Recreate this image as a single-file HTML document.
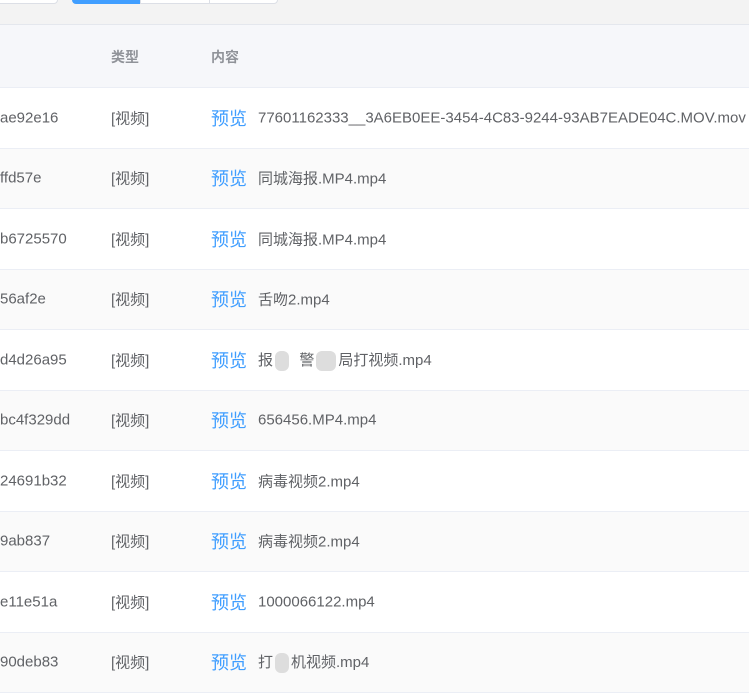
<!DOCTYPE html>
<html><head><meta charset="utf-8"><style>
body{margin:0;width:749px;height:681px;overflow:hidden;background:#fff;font-family:"Liberation Sans","Noto Sans CJK SC",sans-serif;position:relative}
.top{position:absolute;left:0;top:0;width:749px;height:24px;background:#f3f3f3;border-bottom:1px solid #e4e7ed}
.b{position:absolute;top:-6px;height:10px;border:1px solid #dcdfe6;background:#fff;border-radius:0 0 4px 4px;box-sizing:border-box}
.hd{position:absolute;top:25px;left:0;width:749px;height:62px;background:#f6f7fa;border-bottom:1px solid #ebeef5;color:#909399;font-size:14px;font-weight:bold}
.hd span{position:absolute;top:22px}
.r{position:absolute;left:0;width:749px;height:60.5px;border-bottom:1px solid #ebeef5;box-sizing:border-box;font-size:15px;color:#606266;white-space:nowrap}
.r:nth-child(even){background:#fafafa}
.r span{position:absolute;top:50%;transform:translateY(-50%)}
.p{color:#409eff;font-size:18px}
.blur{display:inline-block;width:14px;height:20px;background:#ddd;border-radius:6px;vertical-align:middle;margin:0 2px}
</style></head><body>
<div class="top">
<div class="b" style="left:-4px;width:62px"></div>
<div class="b" style="left:72px;width:70px;background:#409eff;border-color:#409eff;border-radius:0 0 0 4px"></div>
<div class="b" style="left:140px;width:70px;border-radius:0"></div>
<div class="b" style="left:209px;width:69px;border-radius:0 0 4px 0"></div>
</div>
<div class="hd"><span style="left:111px">类型</span><span style="left:211px">内容</span></div>
<div style="position:absolute;top:88px;left:0">
<div class="r" style="top:0"><span style="left:0">ae92e16</span><span style="left:111px">[视频]</span><span class="p" style="left:211px">预览</span><span style="left:258px">77601162333__3A6EB0EE-3454-4C83-9244-93AB7EADE04C.MOV.mov</span></div>
<div class="r" style="top:60.5px"><span style="left:0">ffd57e</span><span style="left:111px">[视频]</span><span class="p" style="left:211px">预览</span><span style="left:258px">同城海报.MP4.mp4</span></div>
<div class="r" style="top:121px"><span style="left:0">b6725570</span><span style="left:111px">[视频]</span><span class="p" style="left:211px">预览</span><span style="left:258px">同城海报.MP4.mp4</span></div>
<div class="r" style="top:181.5px"><span style="left:0">56af2e</span><span style="left:111px">[视频]</span><span class="p" style="left:211px">预览</span><span style="left:258px">舌吻2.mp4</span></div>
<div class="r" style="top:242px"><span style="left:0">d4d26a95</span><span style="left:111px">[视频]</span><span class="p" style="left:211px">预览</span><span style="left:258px">报<i class="blur"></i>&nbsp;&nbsp;警<i class="blur" style="width:20px"></i>局打视频.mp4</span></div>
<div class="r" style="top:302.5px"><span style="left:0">bc4f329dd</span><span style="left:111px">[视频]</span><span class="p" style="left:211px">预览</span><span style="left:258px">656456.MP4.mp4</span></div>
<div class="r" style="top:363px"><span style="left:0">24691b32</span><span style="left:111px">[视频]</span><span class="p" style="left:211px">预览</span><span style="left:258px">病毒视频2.mp4</span></div>
<div class="r" style="top:423.5px"><span style="left:0">9ab837</span><span style="left:111px">[视频]</span><span class="p" style="left:211px">预览</span><span style="left:258px">病毒视频2.mp4</span></div>
<div class="r" style="top:484px"><span style="left:0">e11e51a</span><span style="left:111px">[视频]</span><span class="p" style="left:211px">预览</span><span style="left:258px">1000066122.mp4</span></div>
<div class="r" style="top:544.5px"><span style="left:0">90deb83</span><span style="left:111px">[视频]</span><span class="p" style="left:211px">预览</span><span style="left:258px">打<i class="blur"></i>机视频.mp4</span></div>
</div>
</body></html>
